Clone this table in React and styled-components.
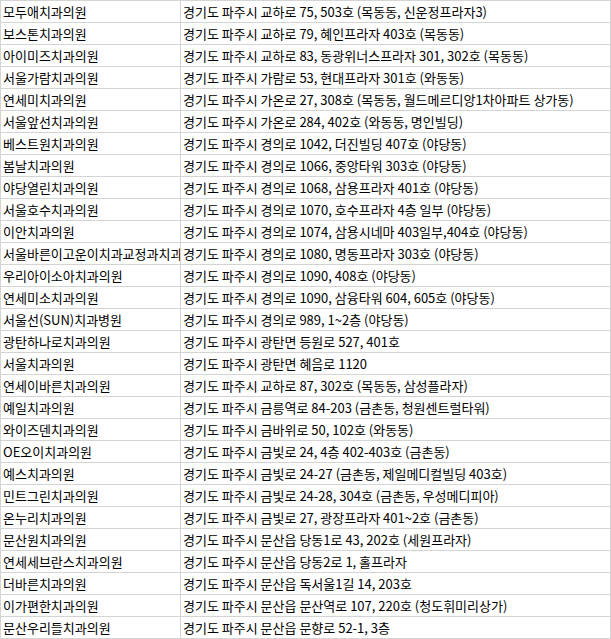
import React from "react";
import styled, { createGlobalStyle } from "styled-components";

const Global = createGlobalStyle`
  html, body { margin: 0; padding: 0; background: #ffffff; }
  body { font-family: "Noto Sans CJK KR", "Noto Sans", sans-serif; }
`;

const rows = [
  ["모두애치과의원", "경기도 파주시 교하로 75, 503호 (목동동, 신운정프라자3)"],
  ["보스톤치과의원", "경기도 파주시 교하로 79, 혜인프라자 403호 (목동동)"],
  ["아이미즈치과의원", "경기도 파주시 교하로 83, 동광위너스프라자 301, 302호 (목동동)"],
  ["서울가람치과의원", "경기도 파주시 가람로 53, 현대프라자 301호 (와동동)"],
  ["연세미치과의원", "경기도 파주시 가온로 27, 308호 (목동동, 월드메르디앙1차아파트 상가동)"],
  ["서울앞선치과의원", "경기도 파주시 가온로 284, 402호 (와동동, 명인빌딩)"],
  ["베스트원치과의원", "경기도 파주시 경의로 1042, 더진빌딩 407호 (야당동)"],
  ["봄날치과의원", "경기도 파주시 경의로 1066, 중앙타워 303호 (야당동)"],
  ["야당열린치과의원", "경기도 파주시 경의로 1068, 삼용프라자 401호 (야당동)"],
  ["서울호수치과의원", "경기도 파주시 경의로 1070, 호수프라자 4층 일부 (야당동)"],
  ["이안치과의원", "경기도 파주시 경의로 1074, 삼용시네마 403일부,404호 (야당동)"],
  ["서울바른이고운이치과교정과치과의원", "경기도 파주시 경의로 1080, 명동프라자 303호 (야당동)"],
  ["우리아이소아치과의원", "경기도 파주시 경의로 1090, 408호 (야당동)"],
  ["연세미소치과의원", "경기도 파주시 경의로 1090, 삼융타워 604, 605호 (야당동)"],
  ["서울선(SUN)치과병원", "경기도 파주시 경의로 989, 1~2층 (야당동)"],
  ["광탄하나로치과의원", "경기도 파주시 광탄면 등원로 527, 401호"],
  ["서울치과의원", "경기도 파주시 광탄면 혜음로 1120"],
  ["연세이바른치과의원", "경기도 파주시 교하로 87, 302호 (목동동, 삼성플라자)"],
  ["예일치과의원", "경기도 파주시 금릉역로 84-203 (금촌동, 청원센트럴타워)"],
  ["와이즈덴치과의원", "경기도 파주시 금바위로 50, 102호 (와동동)"],
  ["OE오이치과의원", "경기도 파주시 금빛로 24, 4층 402-403호 (금촌동)"],
  ["예스치과의원", "경기도 파주시 금빛로 24-27 (금촌동, 제일메디컬빌딩 403호)"],
  ["민트그린치과의원", "경기도 파주시 금빛로 24-28, 304호 (금촌동, 우성메디피아)"],
  ["온누리치과의원", "경기도 파주시 금빛로 27, 광장프라자 401~2호 (금촌동)"],
  ["문산원치과의원", "경기도 파주시 문산읍 당동1로 43, 202호 (세원프라자)"],
  ["연세세브란스치과의원", "경기도 파주시 문산읍 당동2로 1, 홀프라자"],
  ["더바른치과의원", "경기도 파주시 문산읍 독서울1길 14, 203호"],
  ["이가편한치과의원", "경기도 파주시 문산읍 문산역로 107, 220호 (청도휘미리상가)"],
  ["문산우리들치과의원", "경기도 파주시 문산읍 문향로 52-1, 3층"],
];

const Sheet = styled.div`
  display: grid;
  grid-template-columns: 180px 430px;
  width: 611px;
  border-top: 1px solid #d4d4d4;
  border-left: 1px solid #d4d4d4;
  box-sizing: border-box;
  overflow: hidden;
`;

const Cell = styled.div`
  height: 21px;
  border-right: 1px solid #d4d4d4;
  border-bottom: 1px solid #d4d4d4;
  padding: 0 0 0 ${(p) => (p.$first ? "2px" : "2px")};
  box-sizing: content-box;
  display: flex;
  align-items: center;
  white-space: nowrap;
  overflow: hidden;
  font-size: 13px;
  line-height: 21px;
  color: #000000;
  width: ${(p) => (p.$first ? "177px" : "427px")};
`;

export default function App() {
  return (
    <>
      <Global />
      <Sheet>
        {rows.map(([name, addr], i) => (
          <React.Fragment key={i}>
            <Cell $first>{name}</Cell>
            <Cell>{addr}</Cell>
          </React.Fragment>
        ))}
      </Sheet>
    </>
  );
}
